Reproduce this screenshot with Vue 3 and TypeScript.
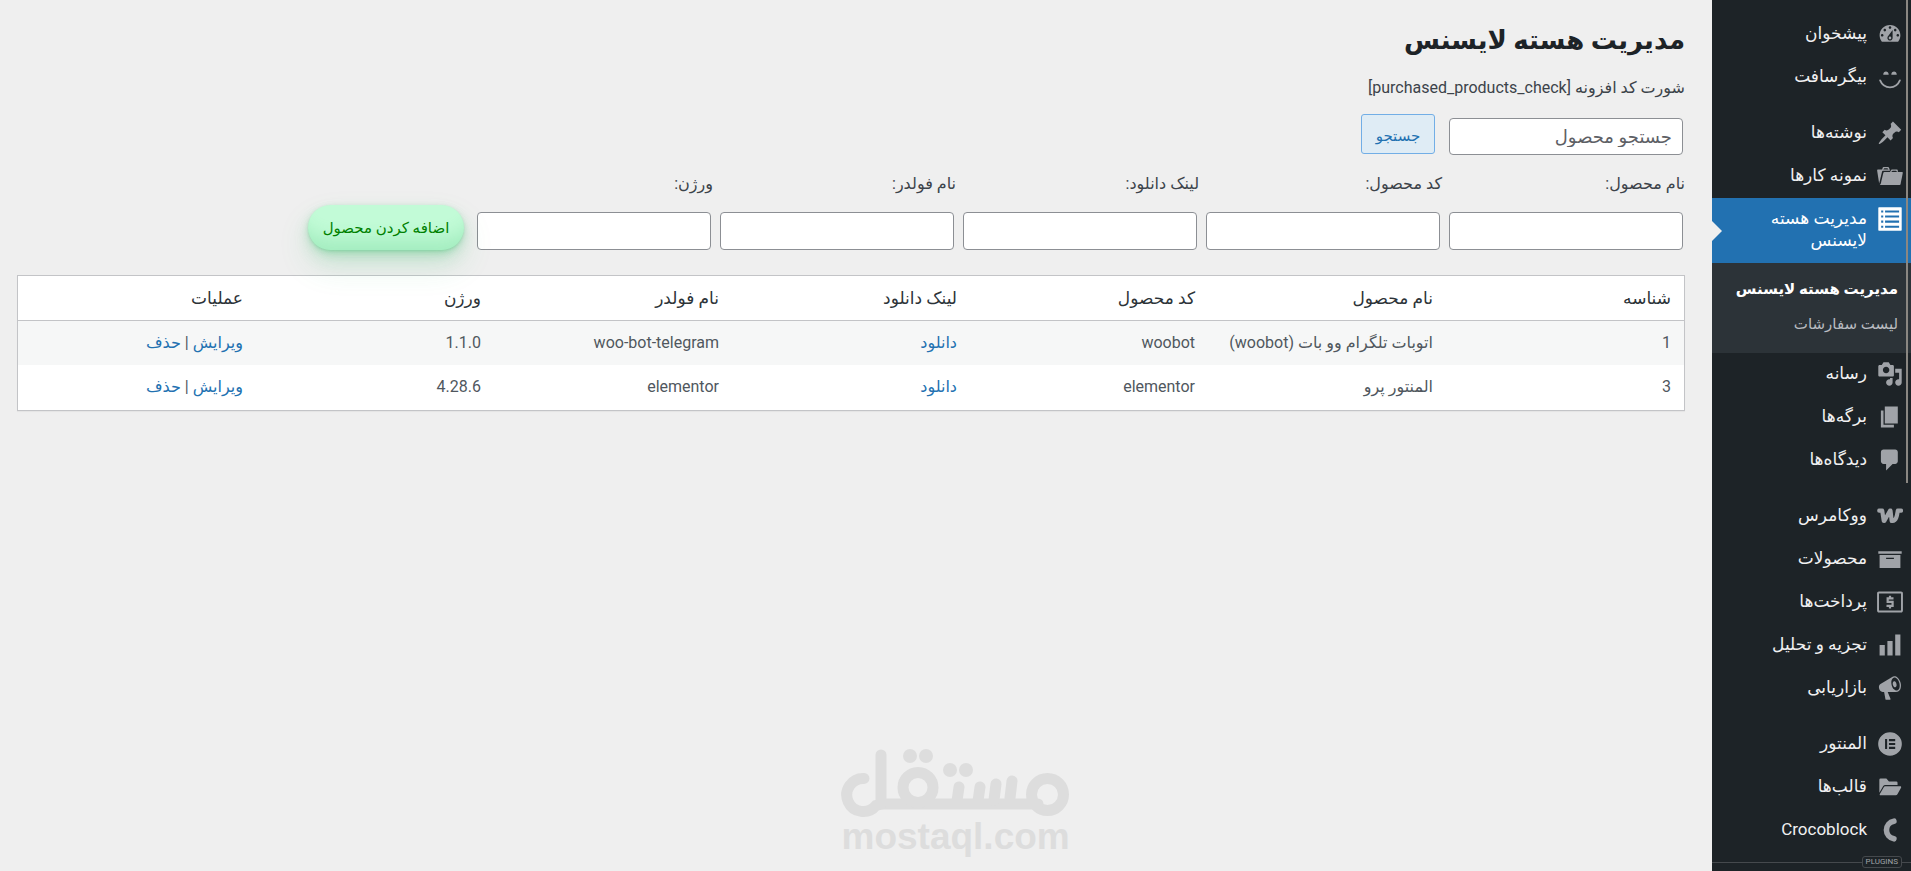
<script setup lang="ts">
import { ref } from 'vue'

interface Shape {
  d: string
  stroke?: number
  round?: boolean
}

interface MenuItem {
  label: string
  icon: string
  gap?: boolean
  children?: string[]
}

interface Product {
  id: number
  name: string
  code: string
  folder: string
  version: string
}

const icons: Record<string, Shape[]> = {
  dashboard: [{ d: 'M3.76 16h12.48c1.1-1.37 1.76-3.11 1.76-5 0-4.42-3.58-8-8-8s-8 3.58-8 8c0 1.89.66 3.63 1.76 5zM10 4c.55 0 1 .45 1 1s-.45 1-1 1-1-.45-1-1 .45-1 1-1zM6 6c.55 0 1 .45 1 1s-.45 1-1 1-1-.45-1-1 .45-1 1-1zm8 0c.55 0 1 .45 1 1s-.45 1-1 1-1-.45-1-1 .45-1 1-1zm-5.37 5.55L12 7v6c0 1.1-.9 2-2 2s-2-.9-2-2c0-.57.24-1.08.63-1.45zM4 10c.55 0 1 .45 1 1s-.45 1-1 1-1-.45-1-1 .45-1 1-1zm12 0c.55 0 1 .45 1 1s-.45 1-1 1-1-.45-1-1 .45-1 1-1zm-5 3c0-.55-.45-1-1-1s-1 .45-1 1 .45 1 1 1 1-.45 1-1z' }],
  smile: [
    { d: 'M2.4 12.600C5.4 19.700 14.600 19.700 17.600 12.600', stroke: 1.4, round: true },
    { d: 'M4.800 8.200C4.800 4.900 9 4.900 9 8.200zM11 8.200C11 4.900 15.200 4.900 15.200 8.200z' },
  ],
  pin: [{ d: 'M10.44 3.02l1.82-1.82 6.36 6.35-1.83 1.82c-1.05-.68-2.48-.57-3.41.36l-.75.75c-.92.93-1.04 2.35-.35 3.41l-1.83 1.82-2.41-2.41-2.8 2.79c-.42.42-3.38 2.71-3.8 2.29s1.86-3.39 2.28-3.81l2.79-2.79L4.1 9.36l1.83-1.82c1.05.69 2.48.57 3.4-.36l.75-.75c.93-.92 1.05-2.35.36-3.41z' }],
  portfolio: [{ d: 'M4 5H.78c-.37 0-.74.32-.69.84l1.56 9.99S3.5 8.47 3.86 6.7c.11-.53.61-.7.98-.7H10s-.7-2.08-.77-2.31C9.11 3.25 8.89 3 8.45 3H5.14c-.36 0-.7.23-.8.64C4.25 4.04 4 5 4 5zm4.88 0h-4s.42-1 .87-1h2.13c.48 0 1 1 1 1zM2.67 16.25c-.31.47-.76.75-1.26.75h15.73c.54 0 .92-.31 1.03-.83.44-2.19 1.68-8.44 1.68-8.44.07-.5-.3-.73-.62-.73H16V5.53c0-.16-.26-.53-.66-.53h-3.76c-.52 0-.87.58-.87.58L10 7H5.59c-.32 0-.63.19-.69.5 0 0-1.59 6.7-1.72 7.33-.07.37-.22.99-.51 1.42zM15.38 7H11s.58-1 1.13-1h2.29c.71 0 .96 1 .96 1z' }],
  list: [{ d: 'M1.500 1h17a.5.5 0 0 1 .5.5v17a.5.5 0 0 1-.5.5h-17a.5.5 0 0 1-.5-.5v-17a.5.5 0 0 1 .5-.5zM3.200 3.400V5h1.600V3.400zm3 0V5h10.800V3.400zM3.200 7.300v1.600h1.600V7.300zm3 0v1.600h10.800V7.300zM3.200 11.200v1.600h1.600v-1.600zm3 0v1.600h10.800v-1.600zM3.200 15.100v1.600h1.600v-1.600zm3 0v1.600h10.800v-1.600z' }],
  media: [{ d: 'M13 11V4c0-.55-.45-1-1-1h-1.67L9 1H5L3.67 3H2c-.55 0-1 .45-1 1v7c0 .55.45 1 1 1h10c.55 0 1-.45 1-1zM7 4.500c1.38 0 2.500 1.120 2.500 2.500S8.380 9.500 7 9.500 4.500 8.380 4.500 7 5.620 4.500 7 4.500zM14 6h5v10.500c0 1.380-1.120 2.500-2.500 2.500S14 17.880 14 16.500s1.120-2.500 2.500-2.500c.17 0 .34.02.5.05V9h-3V6zm-4 8.050V13h2v3.500c0 1.380-1.120 2.500-2.500 2.500S7 17.880 7 16.500 8.120 14 9.500 14c.17 0 .34.02.5.05z' }],
  pages: [{ d: 'M6 15V2h10v13H6zm-1 1h8v2H3V5h2v11z' }],
  comment: [{ d: 'M5 2h9c1.1 0 2 .9 2 2v7c0 1.1-.9 2-2 2h-2l-5 5v-5H5c-1.1 0-2-.9-2-2V4c0-1.1.9-2 2-2z' }],
  woo: [{ d: 'M1.700 5.900H4L5.200 13.800H5.600L10 5.900H10.400L11.300 13.800H12C15 13.800 15.500 9 16 5.900H18.500', stroke: 3.200, round: true }],
  archive: [{ d: 'M19 4v2H1V4h18zM2 7h16v10H2V7zm11 3V9H7v1h6z' }],
  money: [
    { d: 'M1.500 2.700h17a.7.7 0 0 1 .7.7v13.200a.7.7 0 0 1-.7.7h-17a.7.7 0 0 1-.7-.7V3.400a.7.7 0 0 1 .7-.7z', stroke: 1.500 },
    { d: 'M12.700 7.200H8.200v2.700h3.800v3H7.300M10 5.200v1.800M10 13v2', stroke: 1.700 },
  ],
  chart: [{ d: 'M18 18V2h-4v16h4zm-6 0V7H8v11h4zm-6 0v-8H2v8h4z' }],
  megaphone: [{ d: 'M18.15 5.94c.46 1.62.38 3.22-.02 4.48-.42 1.28-1.26 2.18-2.3 2.48-.16.06-.26.06-.4.06-.06.02-.12.02-.18.02-.06.02-.14.02-.22.02h-6.8l2.22 5.5c.02.14-.06.26-.14.34-.08.1-.24.16-.34.16H6.95c-.1 0-.26-.06-.34-.16-.08-.08-.16-.2-.14-.34l-1-5.5H4.25l-.02-.02c-.5.06-1.08-.18-1.54-.62s-.88-1.08-1.06-1.88c-.24-.8-.2-1.56-.02-2.2.18-.62.58-1.08 1.06-1.3l.02-.02 9-5.4c.1-.06.18-.1.24-.16.06-.04.14-.08.24-.12.16-.08.28-.12.5-.18 1.04-.3 2.24.1 3.22.98s1.84 2.24 2.26 3.86zm-2.58 5.98h-.02c.4-.1.74-.34 1.04-.7.58-.7.86-1.76.86-3.04 0-.64-.1-1.3-.28-1.98-.34-1.36-1.02-2.5-1.78-3.24s-1.68-1.1-2.46-.88c-.82.22-1.4.96-1.7 2-.32 1.04-.28 2.36.06 3.72.38 1.36 1 2.5 1.8 3.24.78.74 1.62 1.1 2.48.88zm-2.54-7.08c.22-.04.42-.02.62.04.38.16.76.48 1.02 1s.42 1.2.42 1.78c0 .3-.04.56-.12.8-.18.48-.44.84-.86.94-.34.1-.8-.06-1.14-.4s-.64-.86-.78-1.5c-.18-.62-.12-1.24.02-1.72s.48-.84.82-.94z' }],
  elementor: [{ d: 'M10 .9a9.100 9.100 0 1 0 0 18.200 9.100 9.100 0 0 0 0-18.200zM6.200 6.200h1.600v7.600H6.200zm3 0h4.800v1.600H9.200zm0 3h4.800v1.600H9.200zm0 3h4.800v1.600H9.200z' }],
  folder: [{ d: 'M1.800 4.500a1 1 0 0 1 1-1h4.400l2 2.200h5.600a1 1 0 0 1 1 1v1.800H6.400a2 2 0 0 0-1.700 1L1.800 14.500zM6.300 9.500h11.600c.6 0 .9.500.6 1l-2.800 5a1.500 1.500 0 0 1-1.300.8H2.700c-.6 0-.8-.5-.5-1l3-5.100a1.300 1.300 0 0 1 1.100-.7z' }],
  croco: [{ d: 'M13 3.200A6.900 6.900 0 0 0 13 16.800', stroke: 4.300, round: true }],
}

const menu: MenuItem[] = [
  { label: 'پیشخوان', icon: 'dashboard' },
  { label: 'بیگرسافت', icon: 'smile' },
  { label: 'نوشته‌ها', icon: 'pin', gap: true },
  { label: 'نمونه کارها', icon: 'portfolio' },
  { label: 'مدیریت هسته لایسنس', icon: 'list', children: ['مدیریت هسته لایسنس', 'لیست سفارشات'] },
  { label: 'رسانه', icon: 'media' },
  { label: 'برگه‌ها', icon: 'pages' },
  { label: 'دیدگاه‌ها', icon: 'comment' },
  { label: 'ووکامرس', icon: 'woo', gap: true },
  { label: 'محصولات', icon: 'archive' },
  { label: 'پرداخت‌ها', icon: 'money' },
  { label: 'تجزیه و تحلیل', icon: 'chart' },
  { label: 'بازاریابی', icon: 'megaphone' },
  { label: 'المنتور', icon: 'elementor', gap: true },
  { label: 'قالب‌ها', icon: 'folder' },
  { label: 'Crocoblock', icon: 'croco' },
]

const fields = [
  { id: 'product-name', label: 'نام محصول:' },
  { id: 'product-code', label: 'کد محصول:' },
  { id: 'download-link', label: 'لینک دانلود:' },
  { id: 'folder-name', label: 'نام فولدر:' },
  { id: 'version', label: 'ورژن:' },
]

const columns = ['شناسه', 'نام محصول', 'کد محصول', 'لینک دانلود', 'نام فولدر', 'ورژن', 'عملیات']

const products: Product[] = [
  { id: 1, name: 'اتوبات تلگرام وو بات (woobot)', code: 'woobot', folder: 'woo-bot-telegram', version: '1.1.0' },
  { id: 3, name: 'المنتور پرو', code: 'elementor', folder: 'elementor', version: '4.28.6' },
]

const query = ref('')
</script>

<template>
  <div class="admin" dir="rtl">
    <aside class="sidebar">
      <nav>
        <ul class="menu">
          <li v-for="item in menu" :key="item.label" :class="{ gap: item.gap, current: item.children }">
            <a href="#" class="item">
              <span class="icon">
                <svg viewBox="0 0 20 20" aria-hidden="true">
                  <path
                    v-for="(shape, i) in icons[item.icon]"
                    :key="i"
                    :d="shape.d"
                    :class="{ line: shape.stroke, round: shape.round }"
                    :stroke-width="shape.stroke"
                    fill-rule="evenodd"
                  />
                </svg>
              </span>
              <span class="name">{{ item.label }}</span>
            </a>
            <ul v-if="item.children" class="submenu">
              <li v-for="(child, i) in item.children" :key="child">
                <a href="#" :class="{ active: i === 0 }">{{ child }}</a>
              </li>
            </ul>
          </li>
        </ul>
      </nav>
      <div class="plugins"><span>PLUGINS</span></div>
      <div class="scroll"></div>
    </aside>

    <main class="content">
      <h1>مدیریت هسته لایسنس</h1>
      <p class="shortcode">شورت کد افزونه [purchased_products_check]</p>
      <form class="search" @submit.prevent>
        <input v-model="query" type="text" placeholder="جستجو محصول" aria-label="جستجو محصول" />
        <button type="submit">جستجو</button>
      </form>
      <form class="add" @submit.prevent>
        <div v-for="field in fields" :key="field.id" class="field">
          <label :for="field.id">{{ field.label }}</label>
          <input :id="field.id" type="text" />
        </div>
        <button type="submit">اضافه کردن محصول</button>
      </form>
      <table>
        <thead>
          <tr>
            <th v-for="column in columns" :key="column" scope="col">{{ column }}</th>
          </tr>
        </thead>
        <tbody>
          <tr v-for="product in products" :key="product.id">
            <td>{{ product.id }}</td>
            <td>{{ product.name }}</td>
            <td>{{ product.code }}</td>
            <td><a href="#">دانلود</a></td>
            <td>{{ product.folder }}</td>
            <td>{{ product.version }}</td>
            <td><a href="#">ویرایش</a> | <a href="#">حذف</a></td>
          </tr>
        </tbody>
      </table>
    </main>

    <div class="watermark" dir="ltr">
      <svg viewBox="0 0 228 68" role="img" aria-label="مستقل">
        <g fill="none" stroke="#dddddd" stroke-width="11" stroke-linecap="round">
          <circle cx="205.500" cy="45.500" r="16" />
          <path d="M22 29.500a16.500 16.500 0 1 0 12 27L39 55H196" />
          <path d="M39 6V55" />
          <circle cx="76" cy="38.500" r="15" />
          <path d="M170 32l-2 17M154 35l-2 16M138 38l-2 14M117 38l-2 14" />
        </g>
        <g fill="#dddddd">
          <circle cx="68" cy="7" r="7" />
          <circle cx="84" cy="7" r="7" />
          <circle cx="108" cy="21" r="7" />
          <circle cx="124" cy="21" r="7" />
        </g>
      </svg>
      <span>mostaql.com</span>
    </div>
  </div>
</template>

<style>
body {
  margin: 0;
  background: #f0f0f1;
}
</style>

<style scoped>
.admin {
  display: flex;
  min-height: 100vh;
  background: #efefef;
  color: #3c434a;
  font-family: Roboto, 'DejaVu Sans', sans-serif;
  font-size: 16px;
  line-height: 22px;
  position: relative;
}

a {
  color: #2271b1;
  text-decoration: none;
}

input,
button {
  box-sizing: border-box;
  font: inherit;
}

.sidebar {
  flex: none;
  width: 199px;
  box-sizing: border-box;
  padding-top: 13px;
  background: #1d2327;
  position: relative;
}

ul {
  list-style: none;
  margin: 0;
  padding: 0;
}

.gap {
  margin-top: 13px;
}

.item {
  display: flex;
  align-items: flex-start;
  padding: 9px 0 12px;
  color: #f0f0f1;
  font-size: 17px;
}

.icon {
  flex: none;
  display: flex;
  align-items: center;
  justify-content: center;
  box-sizing: border-box;
  width: 44px;
  height: 24px;
  margin-bottom: -2px;
  padding-left: 2px;
}

.icon svg {
  flex: none;
  width: 26px;
  height: 26px;
  fill: #a0a3a8;
}

.icon .line {
  fill: none;
  stroke: #a0a3a8;
}

.icon .round {
  stroke-linecap: round;
  stroke-linejoin: round;
}

.name {
  flex: 1;
  padding-left: 40px;
}

.current .item {
  background: #2271b1;
  color: #ffffff;
  position: relative;
}

.current .item::after {
  content: '';
  position: absolute;
  left: 0;
  top: 50%;
  margin-top: -10px;
  border: 10px solid transparent;
  border-left-color: #efefef;
  border-right-width: 0;
}

.current .icon svg {
  fill: #ffffff;
}

.submenu {
  padding: 9px 0 11px;
  background: #2c3338;
}

.submenu a {
  display: block;
  padding: 6px 13px 7px;
  color: #b9bcc0;
  font-size: 15px;
  white-space: nowrap;
}

.submenu .active {
  color: #ffffff;
  font-weight: 700;
}

.plugins {
  display: flex;
  align-items: center;
  height: 16px;
  margin-top: 2px;
}

.plugins::before,
.plugins::after {
  content: '';
  height: 1px;
  background: #45494d;
}

.plugins::before {
  width: 9px;
}

.plugins::after {
  flex: 1;
}

.plugins span {
  border: 1px solid #45494d;
  border-radius: 3px;
  padding: 0 3px;
  color: #a0a3a8;
  font-size: 8px;
  line-height: 10px;
}

.scroll {
  position: absolute;
  top: 0;
  right: 3px;
  width: 2px;
  height: 483px;
  background: #8a8782;
}

.content {
  flex: 1;
  min-width: 0;
  padding: 20px 27px 20px 17px;
}

h1 {
  margin: 0;
  color: #1d2327;
  font-size: 26px;
  line-height: 40px;
  font-weight: 700;
}

.shortcode {
  margin: 16px 0 14px;
  line-height: 24px;
}

input {
  height: 38px;
  margin: 0 2px 0 0;
  padding: 0 10px;
  border: 1px solid #8c8f94;
  border-radius: 4px;
  background: #ffffff;
  color: #2c3338;
}

input::placeholder {
  color: #5d6065;
  opacity: 1;
}

.search {
  display: flex;
  gap: 14px;
}

.search input {
  width: 234px;
  height: 37px;
  margin-top: 4px;
  font-size: 18px;
}

.search button {
  width: 74px;
  height: 40px;
  padding: 3px 0 0;
  border: 1px solid #72aee6;
  border-radius: 3px;
  background: #dfecf5;
  color: #2271b1;
  font-size: 15px;
}

.add {
  display: flex;
  align-items: flex-end;
  gap: 7px;
  margin-top: 18px;
}

.field {
  display: flex;
  flex-direction: column;
  width: 236px;
}

.field label {
  margin-bottom: 17px;
}

.add button {
  position: relative;
  width: 156px;
  height: 45px;
  margin-right: 6px;
  padding: 0;
  border: 0;
  border-radius: 100px;
  background: #c2fbd7;
  color: #008000;
  font-size: 15px;
  box-shadow:
    rgba(44, 187, 99, 0.2) 0 -25px 18px -14px inset,
    rgba(44, 187, 99, 0.15) 0 1px 2px,
    rgba(44, 187, 99, 0.15) 0 2px 4px,
    rgba(44, 187, 99, 0.15) 0 4px 8px,
    rgba(44, 187, 99, 0.15) 0 8px 16px,
    rgba(44, 187, 99, 0.15) 0 16px 32px;
}

table {
  width: 100%;
  margin-top: 25px;
  table-layout: fixed;
  border: 1px solid #c3c4c7;
  border-spacing: 0;
  background: #ffffff;
  box-shadow: 0 1px 1px rgba(0, 0, 0, 0.04);
}

th,
td {
  padding: 11px 13px;
  text-align: right;
  font-weight: 400;
  white-space: nowrap;
}

th {
  border-bottom: 1px solid #c3c4c7;
  color: #2c3338;
  font-size: 17px;
}

td {
  color: #50575e;
}

tbody tr:nth-child(odd) {
  background: #f6f7f7;
}

tbody tr:last-child td {
  padding-bottom: 12px;
}

.watermark {
  position: absolute;
  left: 50%;
  bottom: 14px;
  width: 228px;
  margin-left: -114px;
  pointer-events: none;
}

.watermark svg {
  display: block;
  width: 228px;
  height: 68px;
  overflow: visible;
}

.watermark span {
  display: block;
  color: #dddddd;
  font: 700 37px/40px 'Liberation Sans', Arial, sans-serif;
  text-align: center;
}
</style>
